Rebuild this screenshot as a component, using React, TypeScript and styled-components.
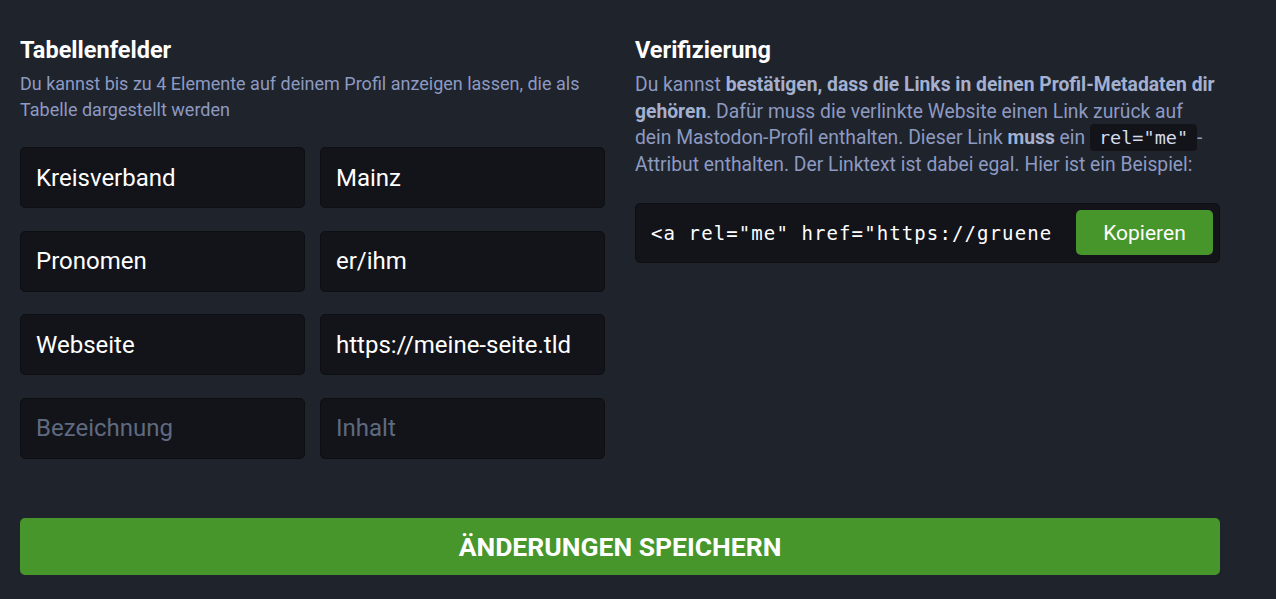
import styled, { createGlobalStyle } from "styled-components";

const GlobalStyle = createGlobalStyle`
  html, body {
    margin: 0;
    padding: 0;
    background: #1f232b;
  }
  body {
    font-family: Roboto, "Noto Sans", sans-serif;
    color: #ffffff;
  }
`;

const fields = [
  { name: "Kreisverband", value: "Mainz" },
  { name: "Pronomen", value: "er/ihm" },
  { name: "Webseite", value: "https://meine-seite.tld" },
  { name: "", value: "" },
];

const App = () => {
  return (
    <>
      <GlobalStyle />
      <Page>
        <Columns>
          <Column>
            <Heading>Tabellenfelder</Heading>
            <Hint>
              Du kannst bis zu 4 Elemente auf deinem Profil anzeigen lassen, die als
              Tabelle dargestellt werden
            </Hint>
            <FieldGrid>
              {fields.map((f, i) => (
                <FieldRow key={i}>
                  <TextInput defaultValue={f.name} placeholder="Bezeichnung" />
                  <TextInput defaultValue={f.value} placeholder="Inhalt" />
                </FieldRow>
              ))}
            </FieldGrid>
          </Column>

          <Column>
            <Heading>Verifizierung</Heading>
            <Paragraph>
              Du kannst <strong>bestätigen, dass die Links in deinen Profil-Metadaten dir
              gehören</strong>. Dafür muss die verlinkte Website einen Link zurück auf
              dein Mastodon-Profil enthalten. Dieser Link <strong>muss</strong> ein{" "}
              <InlineCode>rel="me"</InlineCode>-Attribut enthalten. Der Linktext ist
              dabei egal. Hier ist ein Beispiel:
            </Paragraph>
            <CopyBox>
              <CopyInput
                readOnly
                value={'<a rel="me" href="https://gruene.social/@max">Mastodon</a>'}
              />
              <CopyButton>Kopieren</CopyButton>
            </CopyBox>
          </Column>
        </Columns>

        <SaveButton>Änderungen speichern</SaveButton>
      </Page>
    </>
  );
};

const Page = styled.div`
  width: 1200px;
  padding: 34px 20px 24px 20px;
`;

const Columns = styled.div`
  display: grid;
  grid-template-columns: 585px 585px;
  column-gap: 30px;
`;

const Column = styled.div`
  display: flex;
  flex-direction: column;
`;

const Heading = styled.h3`
  margin: 0 0 6px 0;
  font-size: 23.5px;
  line-height: 32px;
  font-weight: 700;
  color: #ffffff;
`;

const Hint = styled.p`
  margin: -1px 0 24px 0;
  font-size: 18px;
  line-height: 26px;
  color: #8d9ac2;
`;

const Paragraph = styled.p`
  margin: 0 0 24px 0;
  font-size: 19.3px;
  line-height: 26.7px;
  color: #8d9ac2;

  strong {
    font-weight: 700;
    color: #a3b0cf;
  }
`;

const InlineCode = styled.code`
  font-family: "DejaVu Sans Mono", "Liberation Mono", monospace;
  font-size: 18.5px;
  color: #d5dcec;
  background: #131419;
  border-radius: 4px;
  padding: 3px 9px;
`;

const FieldGrid = styled.div`
  display: flex;
  flex-direction: column;
  gap: 22.5px;
`;

const FieldRow = styled.div`
  display: grid;
  grid-template-columns: 1fr 1fr;
  gap: 15px;
`;

const TextInput = styled.input`
  box-sizing: border-box;
  height: 61px;
  width: 100%;
  padding: 0 15px;
  background: #131419;
  border: 1px solid #0e0f13;
  border-radius: 5px;
  font-family: Roboto, "Noto Sans", sans-serif;
  font-size: 24px;
  color: #ffffff;
  outline: none;

  &::placeholder {
    color: #5f6a80;
  }
`;

const CopyBox = styled.div`
  display: flex;
  align-items: center;
  height: 60px;
  box-sizing: border-box;
  padding: 0 6px 0 15px;
  gap: 20px;
  background: #131419;
  border: 1px solid #0e0f13;
  border-radius: 5px;
`;

const CopyInput = styled.input`
  flex: 1;
  min-width: 0;
  background: transparent;
  border: none;
  outline: none;
  padding: 0;
  font-family: "DejaVu Sans Mono", "Liberation Mono", monospace;
  font-size: 19px;
  letter-spacing: 1.1px;
  color: #ffffff;
`;

const CopyButton = styled.button`
  flex: none;
  width: 137px;
  height: 45px;
  background: #46962b;
  border: none;
  border-radius: 5px;
  color: #ffffff;
  font-family: Roboto, "Noto Sans", sans-serif;
  font-size: 21px;
  font-weight: 400;
`;

const SaveButton = styled.button`
  display: block;
  width: 1200px;
  height: 57px;
  margin-top: 59px;
  background: #46962b;
  border: none;
  border-radius: 5px;
  color: #ffffff;
  font-family: Roboto, "Noto Sans", sans-serif;
  font-size: 26.5px;
  font-weight: 700;
  text-transform: uppercase;
`;

export default App;
